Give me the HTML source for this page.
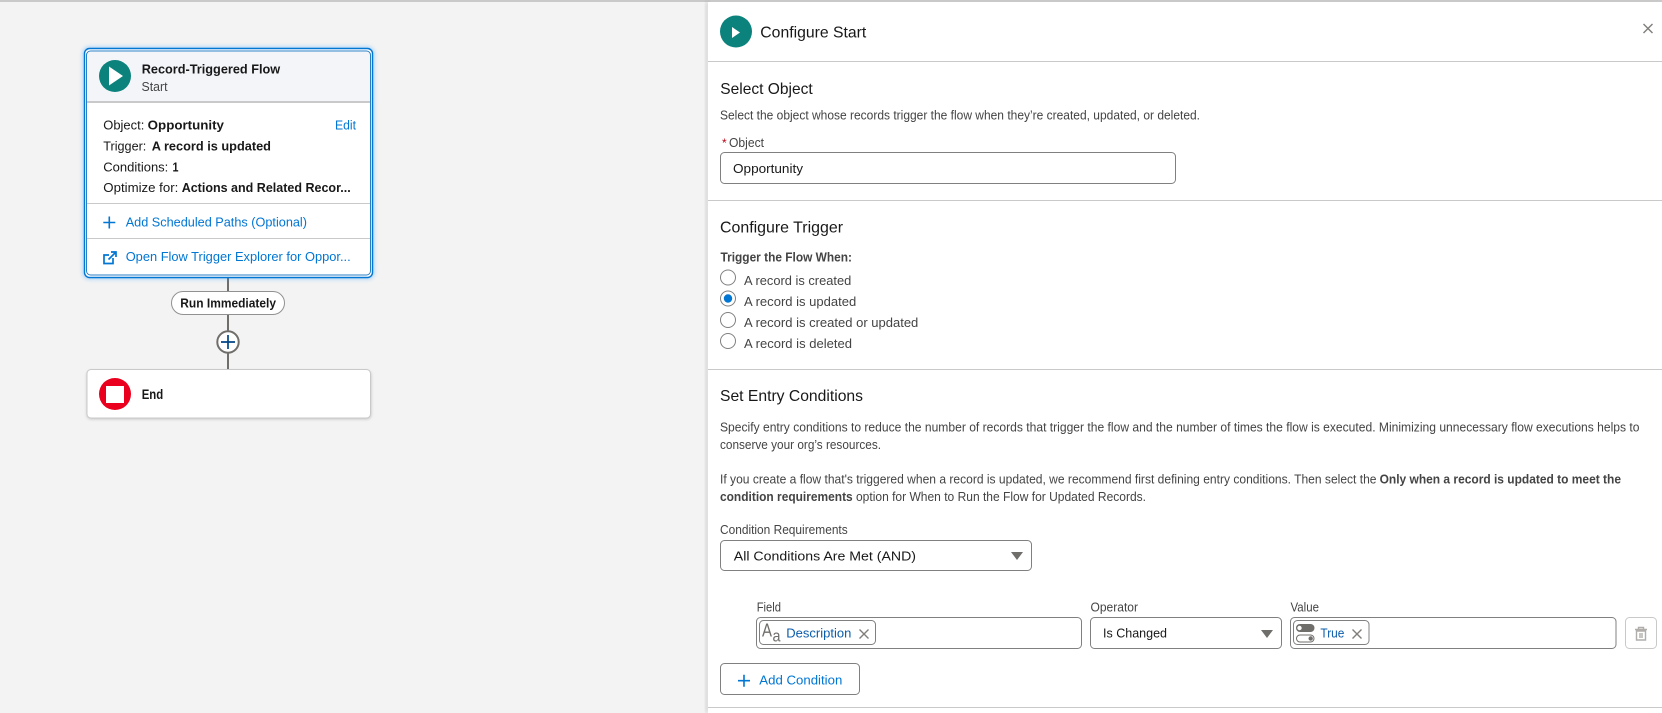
<!DOCTYPE html>
<html><head><meta charset="utf-8"><title>Configure Start</title>
<style>
html,body{margin:0;padding:0;width:1662px;height:713px;overflow:hidden;background:#f3f3f3}
svg{display:block;position:absolute;left:0;top:0}
text{font-family:"Liberation Sans",Arial,sans-serif;font-size:13px;fill:#181818;white-space:pre}
.b{font-weight:700}
.h{font-size:16px}
.g{fill:#444}
.l{fill:#0176d3}
.p{fill:#0b5cab}
</style></head><body>
<svg width="1662" height="713" viewBox="0 0 1662 713" xmlns="http://www.w3.org/2000/svg">
<defs>
<filter id="glow" x="-10%" y="-10%" width="120%" height="120%"><feGaussianBlur stdDeviation="2.2"/></filter>
<filter id="sh" x="-5%" y="-20%" width="110%" height="140%"><feGaussianBlur stdDeviation="1.5"/></filter>
<filter id="ps" x="-5%" y="-2%" width="110%" height="104%"><feGaussianBlur stdDeviation="2"/></filter>
</defs>
<rect width="1662" height="713" fill="#f3f3f3"/>
<rect x="0" y="0" width="1662" height="2" fill="#c9c9c9"/>

<!-- connectors -->
<rect x="227" y="276" width="2" height="94" fill="#706e6b"/>

<!-- start card -->
<rect x="83" y="47" width="291" height="232" rx="6" fill="#1b96ff" opacity=".4" filter="url(#glow)"/>
<rect x="84.5" y="48.5" width="288" height="229" rx="5" fill="#fff" stroke="#0176d3" stroke-width="1.4"/>
<path d="M87 102V56a4 4 0 0 1 4-4H366a4 4 0 0 1 4 4V102Z" fill="#f3f5f9"/>
<rect x="86.5" y="51" width="284" height="224" rx="4" fill="none" stroke="#2a7fc4" stroke-width="1"/>
<rect x="87" y="101" width="283" height="2" fill="#c9c9c9"/>
<circle cx="115" cy="76" r="16" fill="#0b827c"/>
<path d="M109 66.5L123 76L109 85.5Z" fill="#fff"/>
<text x="141.7" y="73.5" class="b" textLength="138.5" lengthAdjust="spacingAndGlyphs">Record-Triggered Flow</text>
<text x="141.5" y="91" class="g" style="font-size:12.5px" textLength="26" lengthAdjust="spacingAndGlyphs">Start</text>

<text x="103.3" y="129.5" textLength="41" lengthAdjust="spacingAndGlyphs">Object:</text>
<text x="147.7" y="129.5" class="b" textLength="76.3" lengthAdjust="spacingAndGlyphs">Opportunity</text>
<text x="335" y="129.5" class="l" textLength="21" lengthAdjust="spacingAndGlyphs">Edit</text>
<text x="103.3" y="150.5" textLength="43" lengthAdjust="spacingAndGlyphs">Trigger:</text>
<text x="151.7" y="150.5" class="b" textLength="119.3" lengthAdjust="spacingAndGlyphs">A record is updated</text>
<text x="103.3" y="171.5" textLength="65" lengthAdjust="spacingAndGlyphs">Conditions:</text>
<text x="172.5" y="171.5" class="b" textLength="6" lengthAdjust="spacingAndGlyphs">1</text>
<text x="103.3" y="192" textLength="75" lengthAdjust="spacingAndGlyphs">Optimize for:</text>
<text x="181.7" y="192" class="b" textLength="169" lengthAdjust="spacingAndGlyphs">Actions and Related Recor...</text>
<rect x="87" y="203" width="283" height="1" fill="#c9c9c9"/>
<path d="M109.3 216.5V228.5M103.3 222.5H115.3" stroke="#0176d3" stroke-width="1.6" fill="none"/>
<text x="125.7" y="226.5" class="l" textLength="181.3" lengthAdjust="spacingAndGlyphs">Add Scheduled Paths (Optional)</text>
<rect x="87" y="238" width="283" height="1" fill="#c9c9c9"/>
<path d="M109 255H104V263.5H113V258M108.5 259.5L115.5 252.5M111 252H116V257" stroke="#0176d3" stroke-width="1.7" fill="none"/>
<text x="125.7" y="261" class="l" textLength="225" lengthAdjust="spacingAndGlyphs">Open Flow Trigger Explorer for Oppor...</text>

<!-- pill -->
<rect x="171.5" y="291.5" width="113" height="23" rx="11.5" fill="#fff" stroke="#919191"/>
<text x="180.3" y="307.5" class="b" style="font-size:12.5px" textLength="95.7" lengthAdjust="spacingAndGlyphs">Run Immediately</text>

<!-- plus -->
<circle cx="228" cy="342" r="10.7" fill="#fff" stroke="#706e6b" stroke-width="2"/>
<path d="M228 335V349M221 342H235" stroke="#014486" stroke-width="1.7" fill="none"/>

<!-- end card -->
<rect x="87" y="371" width="284" height="48" rx="4" fill="#000" opacity=".22" filter="url(#sh)"/>
<rect x="87" y="369.5" width="283.5" height="48.5" rx="4" fill="#fff" stroke="#c9c9c9"/>
<circle cx="115" cy="394" r="16" fill="#ea001e"/>
<rect x="106" y="386" width="18" height="17" fill="#fff"/>
<text x="141.7" y="399" class="b" style="font-size:14px" textLength="21.5" lengthAdjust="spacingAndGlyphs">End</text>

<!-- panel -->
<rect x="705" y="2" width="5" height="711" fill="#000" opacity=".1" filter="url(#ps)"/>
<rect x="708" y="2" width="954" height="711" fill="#fff"/>
<rect x="708" y="61" width="954" height="1" fill="#c9c9c9"/>
<rect x="708" y="200" width="954" height="1" fill="#c9c9c9"/>
<rect x="708" y="369" width="954" height="1" fill="#c9c9c9"/>
<rect x="708" y="707" width="954" height="1" fill="#c9c9c9"/>

<circle cx="736" cy="31.5" r="16" fill="#0b827c"/>
<path d="M732 27L740 32.5L732 38Z" fill="#fff"/>
<text x="760.3" y="37.5" class="h" textLength="106" lengthAdjust="spacingAndGlyphs">Configure Start</text>
<path d="M1643.5 24L1652.5 33M1652.5 24L1643.5 33" stroke="#807e7b" stroke-width="1.4" fill="none"/>

<text x="720.3" y="94" class="h" textLength="92.4" lengthAdjust="spacingAndGlyphs">Select Object</text>
<text x="720" y="119.5" class="g" style="font-size:12.5px" textLength="480" lengthAdjust="spacingAndGlyphs">Select the object whose records trigger the flow when they’re created, updated, or deleted.</text>
<text x="722" y="147" style="font-size:12px;fill:#ba0517" textLength="5">*</text>
<text x="729" y="147" class="g" style="font-size:12.5px" textLength="35" lengthAdjust="spacingAndGlyphs">Object</text>
<rect x="720.5" y="152.5" width="455" height="31" rx="4" fill="#fff" stroke="#808080"/>
<text x="733" y="173" textLength="70" lengthAdjust="spacingAndGlyphs">Opportunity</text>

<text x="720" y="232.7" class="h" textLength="123" lengthAdjust="spacingAndGlyphs">Configure Trigger</text>
<text x="720.5" y="261.7" class="b" style="font-size:12.5px;fill:#444" textLength="131.5" lengthAdjust="spacingAndGlyphs">Trigger the Flow When:</text>
<circle cx="728" cy="277.5" r="7.5" fill="#fff" stroke="#808080"/>
<circle cx="728" cy="298.5" r="7.5" fill="#fff" stroke="#808080"/>
<circle cx="728" cy="298.5" r="4.2" fill="#0176d3"/>
<circle cx="728" cy="320" r="7.5" fill="#fff" stroke="#808080"/>
<circle cx="728" cy="341" r="7.5" fill="#fff" stroke="#808080"/>
<text x="744" y="285" class="g" textLength="107.3" lengthAdjust="spacingAndGlyphs">A record is created</text>
<text x="744" y="306" class="g" textLength="112.3" lengthAdjust="spacingAndGlyphs">A record is updated</text>
<text x="744" y="327" class="g" textLength="174.3" lengthAdjust="spacingAndGlyphs">A record is created or updated</text>
<text x="744" y="348" class="g" textLength="108" lengthAdjust="spacingAndGlyphs">A record is deleted</text>

<text x="720" y="401" class="h" textLength="143" lengthAdjust="spacingAndGlyphs">Set Entry Conditions</text>
<text x="720" y="431.5" class="g" style="font-size:12.5px" textLength="919.5" lengthAdjust="spacingAndGlyphs">Specify entry conditions to reduce the number of records that trigger the flow and the number of times the flow is executed. Minimizing unnecessary flow executions helps to</text>
<text x="720" y="449" class="g" style="font-size:12.5px" textLength="161" lengthAdjust="spacingAndGlyphs">conserve your org’s resources.</text>
<text x="720" y="483.5" class="g" style="font-size:12.5px" textLength="656.5" lengthAdjust="spacingAndGlyphs">If you create a flow that's triggered when a record is updated, we recommend first defining entry conditions. Then select the</text>
<text x="1379.6" y="483.5" class="b" style="font-size:12.5px;fill:#444" textLength="241.4" lengthAdjust="spacingAndGlyphs">Only when a record is updated to meet the</text>
<text x="720" y="501" class="b" style="font-size:12.5px;fill:#444" textLength="132.7" lengthAdjust="spacingAndGlyphs">condition requirements</text>
<text x="856" y="501" class="g" style="font-size:12.5px" textLength="290" lengthAdjust="spacingAndGlyphs">option for When to Run the Flow for Updated Records.</text>

<text x="720" y="534" class="g" style="font-size:12.5px" textLength="127.7" lengthAdjust="spacingAndGlyphs">Condition Requirements</text>
<rect x="720.5" y="540.5" width="311" height="30" rx="4" fill="#fff" stroke="#808080"/>
<text x="733.8" y="560.5" textLength="182.2" lengthAdjust="spacingAndGlyphs">All Conditions Are Met (AND)</text>
<path d="M1011 552H1023L1017 560Z" fill="#706e6b"/>

<text x="756.7" y="611.7" class="g" style="font-size:12.5px" textLength="24.3" lengthAdjust="spacingAndGlyphs">Field</text>
<rect x="756.5" y="617.5" width="325" height="31" rx="4" fill="#fff" stroke="#808080"/>
<rect x="759.5" y="620.5" width="116" height="24" rx="4" fill="#fff" stroke="#808080"/>
<text x="762" y="636.7" style="font-size:18px;fill:#706e6b" textLength="10" lengthAdjust="spacingAndGlyphs">A</text>
<text x="772.5" y="641.7" style="font-size:17px;fill:#706e6b" textLength="8" lengthAdjust="spacingAndGlyphs">a</text>
<text x="786.3" y="637.7" class="p" textLength="65" lengthAdjust="spacingAndGlyphs">Description</text>
<path d="M859.5 629.5L868.5 638.5M868.5 629.5L859.5 638.5" stroke="#807e7b" stroke-width="1.4" fill="none"/>

<text x="1090.5" y="611.7" class="g" style="font-size:12.5px" textLength="47.5" lengthAdjust="spacingAndGlyphs">Operator</text>
<rect x="1090.5" y="617.5" width="191" height="31" rx="4" fill="#fff" stroke="#808080"/>
<text x="1103" y="637.7" textLength="64" lengthAdjust="spacingAndGlyphs">Is Changed</text>
<path d="M1261 630H1273L1267 638Z" fill="#706e6b"/>

<text x="1290.5" y="611.7" class="g" style="font-size:12.5px" textLength="28.5" lengthAdjust="spacingAndGlyphs">Value</text>
<rect x="1290.5" y="617.5" width="325.5" height="31" rx="4" fill="#fff" stroke="#808080"/>
<rect x="1293.5" y="620.5" width="75.5" height="24" rx="4" fill="#fff" stroke="#808080"/>
<rect x="1296" y="624" width="18.5" height="8" rx="4" fill="#706e6b"/>
<circle cx="1299.5" cy="628" r="2.2" fill="#fff"/>
<rect x="1296.5" y="635" width="17.5" height="7" rx="3.5" fill="#fff" stroke="#706e6b"/>
<circle cx="1310.7" cy="638.5" r="2.2" fill="#706e6b"/>
<text x="1320.4" y="637.7" class="p" textLength="24" lengthAdjust="spacingAndGlyphs">True</text>
<path d="M1352.5 629.5L1361.5 638.5M1361.5 629.5L1352.5 638.5" stroke="#807e7b" stroke-width="1.4" fill="none"/>

<rect x="1625.5" y="617.5" width="31" height="31" rx="4" fill="#fff" stroke="#c9c9c9"/>
<path d="M1635 629.5H1647M1638.5 629V627.5H1643.5V629M1636.5 631H1645.5V640H1636.5Z M1640 633V638M1642 633V638" stroke="#b0adab" stroke-width="1.4" fill="none"/>

<rect x="720.5" y="663.5" width="139" height="31" rx="4" fill="#fff" stroke="#808080"/>
<path d="M744 674.7V686.7M738 680.7H750" stroke="#0176d3" stroke-width="1.6" fill="none"/>
<text x="759.3" y="684.5" class="l" textLength="83" lengthAdjust="spacingAndGlyphs">Add Condition</text>
</svg>
</body></html>
